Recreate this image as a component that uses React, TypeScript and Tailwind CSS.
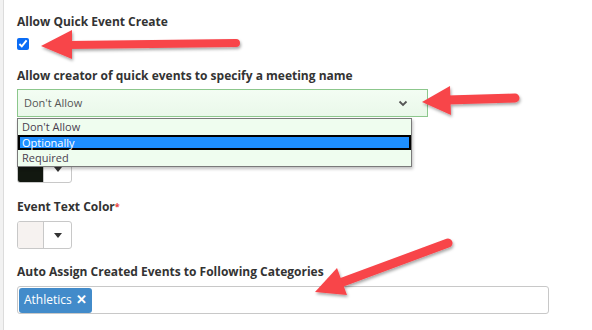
import { useState } from 'react';

const options = ["Don't Allow", 'Optionally', 'Required'];

export default function App() {
  const [quickCreate, setQuickCreate] = useState(true);

  return (
    <div className="relative w-[592px] h-[330px] overflow-hidden bg-white font-['Open_Sans',sans-serif] text-[#333]">
      <div className="flex h-full">
        <div className="w-[4px] shrink-0 bg-[#f2f2f2] border-r border-[#dcdcdc]" />
        <div className="flex-1 pl-[13px] pt-[13px]">
          <div className="text-[12px] leading-[18px] font-bold">Allow Quick Event Create</div>
          <input
            type="checkbox"
            checked={quickCreate}
            onChange={(event) => setQuickCreate(event.target.checked)}
            className="block mt-[7px] h-[12px] w-[12px] accent-[#0a6cf5]"
          />

          <div className="mt-[17px]">
            <div className="text-[12px] leading-[18px] font-bold">Allow creator of quick events to specify a meeting name</div>
            <div className="relative mt-[4px] w-[411px]">
              <div className="flex items-center justify-between h-[28px] pl-[6px] pr-[5px] border border-[#8cc78c] bg-gradient-to-b from-[#f3fdf3] to-[#eaf8ea] text-[11px] text-[#555]">
                <span>Don't Allow</span>
                <svg width="10" height="7" viewBox="0 0 10 7" className="mr-[14px]">
                  <path d="M1.5 1.5 L5 5 L8.5 1.5" fill="none" stroke="#555" strokeWidth="1.8" />
                </svg>
              </div>
              <div className="absolute left-0 top-[29px] z-10 w-[395px] border border-[#7a7a7a] bg-[#effdef] shadow-[1px_2px_3px_rgba(0,0,0,0.25)] text-[11px] text-[#4a3f4f]">
                {options.map((option) => (
                  <div
                    key={option}
                    className={
                      option === 'Optionally'
                        ? 'px-[2px] h-[15px] leading-[11px] bg-[#1e8fff] text-white border-2 border-black'
                        : 'px-[4px] h-[16px] leading-[16px]'
                    }
                  >
                    {option}
                  </div>
                ))}
              </div>
            </div>
          </div>

          <div className="mt-[15px]">
            <div className="h-[18px]" />
            <ColorPicker swatch="bg-[#121810]" />
          </div>

          <div className="mt-[15px]">
            <div className="text-[12px] leading-[18px] font-bold">
              Event Text Color<span className="text-[#e8413c] text-[9px] align-top">*</span>
            </div>
            <ColorPicker swatch="bg-[#f6f2f0]" />
          </div>

          <div className="mt-[14px]">
            <div className="text-[12px] leading-[18px] font-bold">Auto Assign Created Events to Following Categories</div>
            <div className="mt-[5px] flex items-center w-[532px] h-[28px] px-[1px] border border-[#c8c8c8] rounded-[3px] bg-white">
              <span className="flex items-center gap-[4px] h-[25px] px-[5px] rounded-[3px] bg-[#428bca] text-white text-[12px]">
                Athletics
                <span className="font-bold text-[13px]">✕</span>
              </span>
            </div>
          </div>
        </div>
      </div>

      <svg className="absolute inset-0 pointer-events-none" width="592" height="330" viewBox="0 0 592 330">
        <defs>
          <filter id="shadow" x="-20%" y="-20%" width="140%" height="140%">
            <feDropShadow dx="1" dy="2" stdDeviation="1.6" floodColor="#000" floodOpacity="0.35" />
          </filter>
        </defs>
        <g fill="#f8444a" stroke="#f8444a" filter="url(#shadow)">
          <line x1="236" y1="43" x2="68" y2="45" strokeWidth="8" strokeLinecap="round" />
          <polygon points="41,46 72,30 72,59" stroke="none" />

          <line x1="515" y1="98" x2="447" y2="100" strokeWidth="9" strokeLinecap="round" />
          <polygon points="422,102 450,86 451,115" stroke="none" />

          <line x1="448" y1="243" x2="340" y2="283" strokeWidth="9" strokeLinecap="round" />
          <polygon points="315,292 337,268 347,295" stroke="none" />
        </g>
      </svg>
    </div>
  );
}

function ColorPicker({ swatch }: { swatch: string }) {
  return (
    <div className="mt-[5px] flex w-[55px] h-[28px] border border-[#c8c8c8] rounded-[3px] overflow-hidden bg-white">
      <div className={`w-[26px] ${swatch} border-r border-[#c8c8c8]`} />
      <div className="flex-1 flex items-center justify-center">
        <svg width="8" height="5" viewBox="0 0 8 5">
          <polygon points="0,0 8,0 4,5" fill="#333" />
        </svg>
      </div>
    </div>
  );
}
